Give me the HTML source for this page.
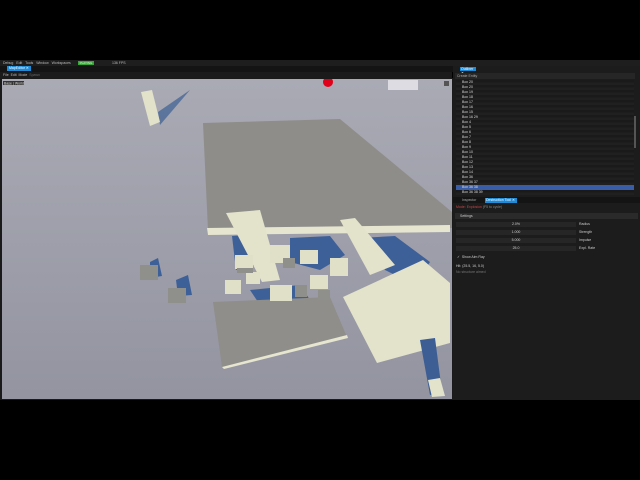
<!DOCTYPE html><html><head><style>
*{margin:0;padding:0;box-sizing:border-box}
body{width:640px;height:480px;background:#000;position:relative;overflow:hidden;font-family:"Liberation Sans",sans-serif;font-size:3.5px;color:#ccc}
.a{position:absolute}
</style></head><body>
<div class="a" style="left:0;top:60px;width:640px;height:6px;background:#1e1e1e"></div>
<div class="a" style="left:3px;top:61px;color:#bbb">Debug&nbsp;&nbsp; Edit&nbsp;&nbsp; Tools&nbsp;&nbsp; Window&nbsp;&nbsp; Workspaces</div>
<div class="a" style="left:78px;top:61px;width:16px;height:4px;background:#3aa33a;color:#dfd;text-align:center;font-size:3px">PLAYING</div>
<div class="a" style="left:112px;top:61px;color:#bbb">136 FPS</div>
<div class="a" style="left:0;top:66px;width:640px;height:6px;background:#141414"></div>
<div class="a" style="left:7px;top:66px;width:24px;height:5px;background:#1f8ad6;color:#fff;padding-left:2px">MapEditor ✕</div>
<div class="a" style="left:0;top:72px;width:452px;height:6px;background:#1b1b1b;color:#bbb;padding-left:3px;line-height:6px">File&nbsp; Edit&nbsp; Mode&nbsp; <span style="color:#666">Spawn</span></div>
<div class="a" style="left:0;top:78px;width:453px;height:322px;background:#1a1a1a"></div>
<svg class="a" style="left:2px;top:79px" width="450" height="320" viewBox="2 79 450 320">
<defs><linearGradient id="g" x1="0" y1="0" x2="0" y2="1"><stop offset="0" stop-color="#a9aab4"/><stop offset="1" stop-color="#9394a0"/></linearGradient></defs>
<rect x="2" y="79" width="450" height="320" fill="url(#g)"/>
<polygon points="203,123 340,119 452,212 452,228 208,230" fill="#8e8d8a"/>
<polygon points="158,112 190,90 160,125" fill="#4a6896" opacity=".8"/>
<polygon points="141,92 152,90 160,122 150,126" fill="#e2e1c9"/>
<polygon points="207,228 450,225 450,232 208,235" fill="#e6e5cf"/>
<g fill="#3e6098">
<polygon points="232,236 262,234 268,262 236,270"/>
<polygon points="290,238 330,236 345,255 320,270 290,262"/>
<polygon points="360,238 395,236 430,262 415,285 385,270"/>
<polygon points="250,290 300,285 310,300 260,305"/>
<polygon points="150,262 158,258 162,276 150,278"/>
<polygon points="176,280 188,275 192,295 178,296"/>
</g>
<polygon points="213,302 330,297 347,337 222,367" fill="#8f8e8a"/>
<polygon points="222,367 347,335 348,338 224,369" fill="#e6e5cf"/>
<polygon points="343,297 423,260 450,283 450,343 377,363" fill="#e3e2cb"/>
<polygon points="226,213 260,210 280,280 262,282" fill="#e3e2cb"/>
<polygon points="340,220 355,218 395,265 370,275" fill="#e3e2cb"/>
<g fill="#e0dfc7">
<rect x="270" y="245" width="20" height="18"/><rect x="300" y="250" width="18" height="14"/>
<rect x="235" y="255" width="18" height="14"/><rect x="225" y="280" width="16" height="14"/>
<rect x="270" y="285" width="22" height="16"/><rect x="310" y="275" width="18" height="14"/>
<rect x="330" y="258" width="18" height="18"/><rect x="246" y="272" width="14" height="12"/>
</g>
<g fill="#8f8f8c">
<rect x="140" y="265" width="18" height="15"/><rect x="168" y="288" width="18" height="15"/>
<rect x="283" y="258" width="12" height="10"/><rect x="295" y="285" width="12" height="12"/>
<rect x="318" y="290" width="12" height="10"/><rect x="237" y="268" width="16" height="5"/>
</g>
<polygon points="420,340 435,338 442,392 430,395" fill="#3c5e94"/>
<polygon points="428,380 440,378 445,396 432,397" fill="#e3e2cb"/>
<circle cx="328" cy="82" r="5" fill="#e0001a"/>
<rect x="388" y="80" width="30" height="10" fill="#e8e8ee" opacity=".8"/>
<rect x="3" y="81" width="21" height="4" fill="#333"/>
<text x="4" y="84.5" font-size="3.5" fill="#ddd" font-family="Liberation Sans">Base | World</text>
<rect x="444" y="81" width="5" height="5" fill="#555"/>
</svg>
<div class="a" style="left:453px;top:66px;width:187px;height:334px;background:#1c1c1c"></div>
<div class="a" style="left:460px;top:67px;width:16px;height:4px;background:#1f8ad6;color:#fff;padding-left:1px">Outliner ✕</div>
<div class="a" style="left:455px;top:73px;width:180px;height:6px;background:#262626;color:#aaa;padding-left:2px;line-height:6px">Create Entity</div>
<div class="a" style="left:456px;top:80px;width:178px;height:115px;background:repeating-linear-gradient(#1a1a1a 0 2.5px,#202020 2.5px 5px);color:#ddd;line-height:5px;padding-left:6px">
Box 20<br>Box 20<br>Box 19<br>Box 18<br>Box 17<br>Box 16<br>Box 15<br>Box 16 29<br>Box 4<br>Box 5<br>Box 6<br>Box 7<br>Box 8<br>Box 9<br>Box 10<br>Box 11<br>Box 12<br>Box 13<br>Box 14<br>Box 36<br>Box 36 37<br><span style="display:block;margin-left:-6px;padding-left:6px;background:#3a5da8">Box 36 38</span>Box 36 38 39</div>
<div class="a" style="left:634px;top:116px;width:2px;height:32px;background:#555"></div>
<div class="a" style="left:453px;top:197px;width:187px;height:6px;background:#141414"></div>
<div class="a" style="left:462px;top:198px;color:#aaa">Inspector</div>
<div class="a" style="left:485px;top:198px;width:32px;height:5px;background:#1f8ad6;color:#fff;padding-left:1px">Destruction Tool ✕</div>
<div class="a" style="left:456px;top:205px;color:#c44">Mode: Explosion <span style="color:#888">(F5 to cycle)</span></div>
<div class="a" style="left:455px;top:213px;width:183px;height:6px;background:#2a2a2a;color:#ccc;padding-left:5px;line-height:6px">Settings</div>
<div class="a" style="left:456px;top:222px;width:120px;height:5px;background:#262626;color:#ccc;text-align:center">2.0%</div><div class="a" style="left:579px;top:222px">Radius</div>
<div class="a" style="left:456px;top:230px;width:120px;height:5px;background:#262626;color:#ccc;text-align:center">1.000</div><div class="a" style="left:579px;top:230px">Strength</div>
<div class="a" style="left:456px;top:238px;width:120px;height:5px;background:#262626;color:#ccc;text-align:center">5.000</div><div class="a" style="left:579px;top:238px">Impulse</div>
<div class="a" style="left:456px;top:246px;width:120px;height:5px;background:#262626;color:#ccc;text-align:center">25.0</div><div class="a" style="left:579px;top:246px">Expl. Rate</div>
<div class="a" style="left:457px;top:255px">✓&nbsp; Show Aim Ray</div>
<div class="a" style="left:456px;top:264px">Hit: (25.5, 16, 5.0)</div>
<div class="a" style="left:456px;top:270px;color:#777">No structure aimed</div>
</body></html>
